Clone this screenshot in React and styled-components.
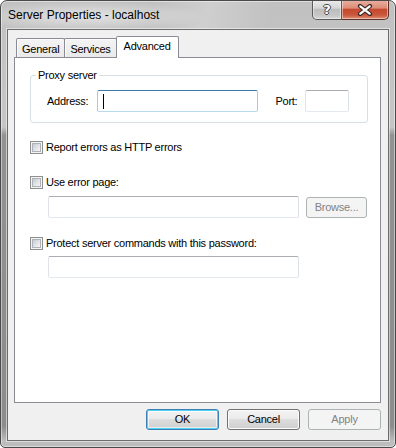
import React from 'react';
import styled, { createGlobalStyle } from 'styled-components';

const Global = createGlobalStyle`
  html, body { margin: 0; padding: 0; background: #ffffff; }
  body { width: 396px; height: 448px; overflow: hidden; }
  *, *::before, *::after { box-sizing: border-box; }
`;

const Window = styled.div`
  width: 396px;
  height: 448px;
  display: flex;
  flex-direction: column;
  padding: 0 6px 6px 6px;
  border: 1px solid #4a4a4a;
  border-radius: 7px 7px 5px 5px;
  overflow: hidden;
  background: linear-gradient(180deg, #c1c1c1 0px, #c6c6c6 126px, #929292 134px, #8c8c8c 425px, #bdbdbd 440px);
  box-shadow: inset 0 0 0 1px rgba(255, 255, 255, 0.45);
  font-family: "Liberation Sans", Arial, sans-serif;
  font-size: 11px;
  letter-spacing: -0.25px;
  color: #000;
`;

const TitleBar = styled.div`
  height: 28px;
  display: flex;
  align-items: flex-start;
  margin: 0 -6px;
  padding: 0 6px 0 7px;
  background:
    radial-gradient(ellipse 120px 15px at 85px 15px, rgba(255,255,255,0.55), rgba(255,255,255,0) 100%),
    linear-gradient(105deg, rgba(255,255,255,0) 38%, rgba(255,255,255,0.22) 52%, rgba(255,255,255,0) 68%);
`;

const Title = styled.div`
  padding-top: 6px;
  font-size: 12px;
  line-height: 16px;
  letter-spacing: 0;
  color: #000;
`;

const Controls = styled.div`
  margin-left: auto;
  margin-top: -1px;
  display: flex;
`;

const CaptionButton = styled.div`
  height: 20px;
  width: ${p => (p.$close ? 47 : 30)}px;
  display: flex;
  align-items: center;
  justify-content: center;
  border: 1px solid ${p => (p.$close ? '#5b3027' : '#5a5a5a')};
  border-top: none;
  ${p => (p.$close ? 'border-left: none;' : '')}
  border-radius: ${p => (p.$close ? '0 0 5px 0' : '0 0 0 5px')};
  background: ${p =>
    p.$close
      ? 'linear-gradient(180deg, #eab0a2 0%, #dc8d78 42%, #c64a2f 50%, #c9553a 78%, #de8f74 100%)'
      : 'linear-gradient(180deg, #ececec 0%, #d6d6d6 42%, #bdbdbd 50%, #c6c6c6 80%, #d8d8d8 100%)'};
  box-shadow: inset 0 0 0 1px rgba(255, 255, 255, 0.45);
  color: #fff;
  font-family: "DejaVu Sans", sans-serif;
  font-weight: bold;
  font-size: 13px;
  letter-spacing: 0;
  text-shadow: 1px 0 0 #444, -1px 0 0 #444, 0 1px 0 #444, 0 -1px 0 #444;
`;

const Client = styled.div`
  flex: 1;
  display: flex;
  flex-direction: column;
  background: #f0f0f0;
  border: 1px solid #6c6c6c;
  box-shadow: 0 0 0 1px rgba(255, 255, 255, 0.5);
  padding: 6px 7px 10px 6px;
`;

const TabStrip = styled.div`
  height: 21px;
  display: flex;
  align-items: flex-end;
  padding-left: 2px;
`;

const Tab = styled.div`
  position: relative;
  z-index: ${p => (p.$active ? 2 : 1)};
  height: ${p => (p.$active ? 22 : 19)}px;
  margin-bottom: ${p => (p.$active ? -1 : 0)}px;
  margin-left: ${p => (p.$first ? 0 : -1)}px;
  padding: ${p => (p.$active ? '0 7px 2px 7px' : '2px 5px 0 5px')};
  display: flex;
  align-items: center;
  border: 1px solid #898c95;
  border-bottom: none;
  border-radius: 2px 2px 0 0;
  background: ${p => (p.$active ? '#ffffff' : 'linear-gradient(180deg, #f4f4f4 0%, #e9e9e9 100%)')};
  box-shadow: ${p => (p.$active ? 'none' : 'inset 1px 1px 0 #fcfcfc')};
  line-height: 13px;
  white-space: nowrap;
`;

const Panel = styled.div`
  flex: 1;
  display: flex;
  flex-direction: column;
  background: #ffffff;
  border: 1px solid #898c95;
  padding: 17px 12px 0 15px;
`;

const GroupBox = styled.div`
  position: relative;
  border: 1px solid #d5dfe5;
  border-radius: 3px;
  padding: 14px 18px 10px 16px;
`;

const GroupLabel = styled.span`
  position: absolute;
  top: -7px;
  left: 5px;
  padding: 0 2px;
  background: #ffffff;
  line-height: 13px;
`;

const FieldRow = styled.div`
  display: flex;
  align-items: center;
  margin-top: ${p => p.$mt || 0}px;
  padding-left: ${p => p.$indent || 0}px;
`;

const Label = styled.span`
  line-height: 13px;
  margin-left: ${p => p.$ml || 0}px;
  margin-right: ${p => p.$mr || 0}px;
  white-space: nowrap;
`;

const TextBox = styled.div`
  position: relative;
  flex: none;
  width: ${p => p.$w}px;
  height: 22px;
  border: 1px solid;
  border-radius: 2px;
  border-color: ${p =>
    p.$focused ? '#3d7bad #a4c9e3 #b7d9ed #a4c9e3' : '#abadb3 #dbdfe6 #e3e9ef #e2e3ea'};
  background: #ffffff;
  padding-left: 5px;
  display: flex;
  align-items: center;
`;

const Caret = styled.span`
  width: 1px;
  height: 15px;
  background: #000;
`;

const CheckBox = styled.span`
  flex: none;
  width: 13px;
  height: 13px;
  border: 1px solid #8e8f8f;
  background: #f4f4f4;
  padding: 1px;
  margin-right: 3px;
  display: flex;
  &::after {
    content: '';
    width: 9px;
    height: 9px;
    border: 1px solid #aeb3b9;
    background: linear-gradient(135deg, #c6cad0 0%, #e2e4e7 55%, #f6f6f6 100%);
  }
`;

const Button = styled.button`
  flex: none;
  width: ${p => p.$w || 73}px;
  height: 21px;
  margin: 0 0 0 ${p => p.$ml || 0}px;
  padding: 0;
  font-family: "Liberation Sans", Arial, sans-serif;
  font-size: 11px;
  letter-spacing: -0.25px;
  line-height: 13px;
  border-radius: 3px;
  border: 1px solid ${p => (p.disabled ? '#adb2b5' : p.$default ? '#3c7fb1' : '#707070')};
  color: ${p => (p.disabled ? '#838383' : '#000')};
  background: ${p =>
    p.disabled
      ? '#f4f4f4'
      : 'linear-gradient(180deg, #f2f2f2 0%, #ebebeb 48%, #dddddd 50%, #cfcfcf 100%)'};
  box-shadow: ${p =>
    p.disabled ? 'none' : p.$default ? 'inset 0 0 0 1px #4fd0f6, inset 0 0 0 2px rgba(255,255,255,0.6)' : 'inset 0 0 0 1px #fcfcfc'};
`;

const ButtonRow = styled.div`
  display: flex;
  justify-content: flex-end;
  gap: 8px;
  margin-top: 6px;
`;

function CloseGlyph() {
  return (
    <svg width="16" height="12" viewBox="0 0 16 12">
      <path d="M3 2 L13 10 M13 2 L3 10" stroke="#3a2a26" strokeWidth="4.2" strokeLinecap="round" />
      <path d="M3.3 2.3 L12.7 9.7 M12.7 2.3 L3.3 9.7" stroke="#ffffff" strokeWidth="2.2" strokeLinecap="round" />
    </svg>
  );
}

export default function App() {
  return (
    <>
      <Global />
      <Window>
        <TitleBar>
          <Title>Server Properties - localhost</Title>
          <Controls>
            <CaptionButton>?</CaptionButton>
            <CaptionButton $close>
              <CloseGlyph />
            </CaptionButton>
          </Controls>
        </TitleBar>
        <Client>
          <TabStrip>
            <Tab $first>General</Tab>
            <Tab>Services</Tab>
            <Tab $active>Advanced</Tab>
          </TabStrip>
          <Panel>
            <GroupBox>
              <GroupLabel>Proxy server</GroupLabel>
              <FieldRow>
                <Label $mr={9}>Address:</Label>
                <TextBox $w={161} $focused>
                  <Caret />
                </TextBox>
                <Label $ml={17} $mr={8}>Port:</Label>
                <TextBox $w={44} />
              </FieldRow>
            </GroupBox>
            <FieldRow $mt={18}>
              <CheckBox />
              <Label>Report errors as HTTP errors</Label>
            </FieldRow>
            <FieldRow $mt={22}>
              <CheckBox />
              <Label>Use error page:</Label>
            </FieldRow>
            <FieldRow $mt={7} $indent={18}>
              <TextBox $w={251} />
              <Button disabled $w={61} $ml={7}>Browse...</Button>
            </FieldRow>
            <FieldRow $mt={19}>
              <CheckBox />
              <Label>Protect server commands with this password:</Label>
            </FieldRow>
            <FieldRow $mt={6} $indent={18}>
              <TextBox $w={251} />
            </FieldRow>
          </Panel>
          <ButtonRow>
            <Button $default>OK</Button>
            <Button>Cancel</Button>
            <Button disabled>Apply</Button>
          </ButtonRow>
        </Client>
      </Window>
    </>
  );
}
